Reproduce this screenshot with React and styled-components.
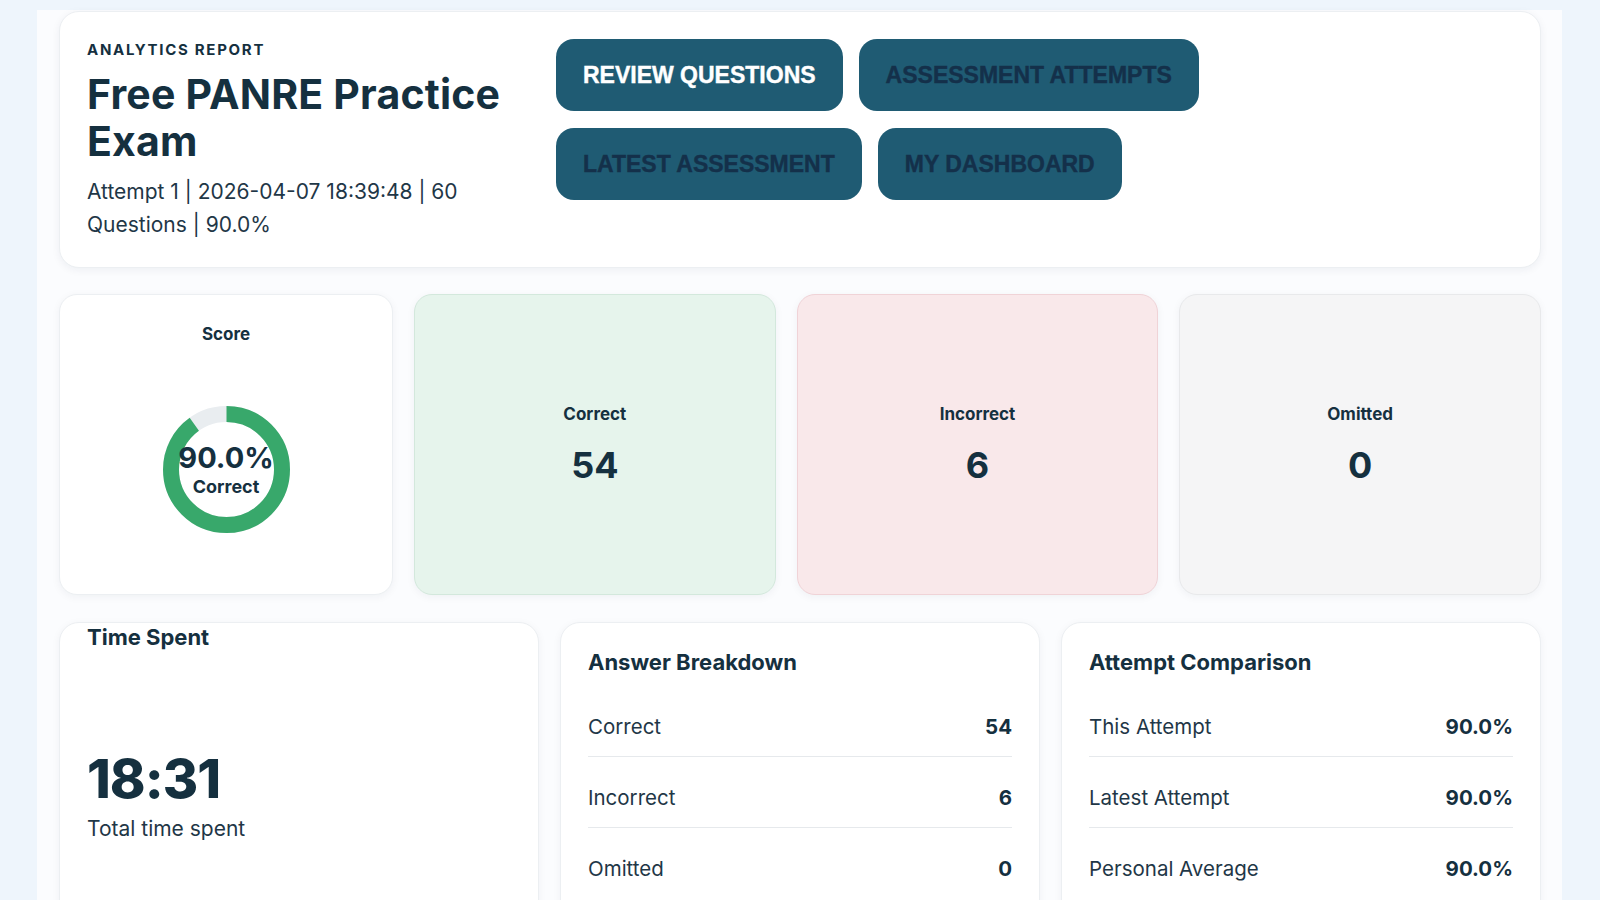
import React from 'react';
import styled, { createGlobalStyle } from 'styled-components';

const GlobalStyle = createGlobalStyle`
	* {
		box-sizing: border-box;
	}
	html,
	body {
		margin: 0;
		padding: 0;
		background: #eef5fc;
		font-family: Inter, 'Noto Sans', sans-serif;
		color: #15303f;
	}
`;

const Page = styled.div`
	padding-top: 10px;
	height: 900px;
	overflow: hidden;
`;

const Wrapper = styled.div`
	margin: 0 38px 0 37px;
	padding: 1px 21px 0 22px;
	background: #fbfcfe;
	min-height: 890px;
`;

const HeaderCard = styled.section`
	display: flex;
	gap: 29px;
	padding: 27px 27px 26px;
	background: #ffffff;
	border: 1px solid #eceff2;
	border-radius: 20px;
	box-shadow: 0 2px 8px rgba(20, 40, 60, 0.06);
`;

const TitleBlock = styled.div`
	width: 440px;
	flex-shrink: 0;
`;

const Eyebrow = styled.div`
	font-size: 15px;
	line-height: 22px;
	font-weight: 700;
	letter-spacing: 1.7px;
	text-transform: uppercase;
`;

const Title = styled.h1`
	margin: 10px 0 0;
	font-size: 41px;
	line-height: 47px;
	font-weight: 700;
	letter-spacing: 0.2px;
`;

const Meta = styled.p`
	margin: 10px 0 0;
	font-size: 21px;
	line-height: 33px;
	color: #1f3747;
`;

const Actions = styled.div`
	display: flex;
	flex-wrap: wrap;
	align-content: flex-start;
	gap: 17px 16px;
	width: 680px;
`;

const ActionButton = styled.button`
	height: 72px;
	padding: 0 27px;
	border: none;
	border-radius: 18px;
	background: #1f5b73;
	color: ${props => (props.primary ? '#ffffff' : '#14304a')};
	font-family: 'Liberation Sans', Arial, sans-serif;
	font-size: 23px;
	font-weight: 700;
	text-transform: uppercase;
	-webkit-text-stroke: 0.4px currentColor;
	cursor: pointer;
`;

const StatsRow = styled.div`
	display: grid;
	grid-template-columns: 334px repeat(3, 1fr);
	gap: 21px;
	margin-top: 26px;
`;

const tones = {
	white: { bg: '#ffffff', border: '#eceff2' },
	green: { bg: '#e6f4ec', border: '#d3e8dc' },
	red: { bg: '#f9e8ea', border: '#f0d3d7' },
	gray: { bg: '#f5f5f6', border: '#e8e9eb' },
};

const StatCard = styled.div`
	height: 301px;
	display: flex;
	flex-direction: column;
	align-items: center;
	justify-content: center;
	background: ${props => tones[props.tone].bg};
	border: 1px solid ${props => tones[props.tone].border};
	border-radius: 18px;
	box-shadow: 0 2px 8px rgba(20, 40, 60, 0.05);
`;

const ScoreCard = styled(StatCard)`
	justify-content: flex-start;
	padding-top: 28px;
`;

const StatLabel = styled.div`
	font-size: 17px;
	line-height: 22px;
	font-weight: 700;
`;

const StatValue = styled.div`
	margin-top: 18px;
	font-size: 36px;
	line-height: 44px;
	font-weight: 700;
`;

const DonutArea = styled.div`
	flex: 1;
	display: flex;
	align-items: center;
	justify-content: center;
`;

const Donut = styled.div`
	position: relative;
	width: 127px;
	height: 127px;
	& > svg {
		display: block;
		transform: rotate(-90deg);
	}
`;

const DonutText = styled.div`
	position: absolute;
	inset: 0;
	display: flex;
	flex-direction: column;
	align-items: center;
	justify-content: center;
	padding-top: 3px;
	white-space: nowrap;
	& > strong {
		font-size: 29px;
		line-height: 32px;
		font-weight: 700;
	}
	& > span {
		font-size: 18px;
		line-height: 26px;
		font-weight: 700;
	}
`;

const BottomRow = styled.div`
	display: grid;
	grid-template-columns: repeat(3, 1fr);
	gap: 21px;
	margin-top: 27px;
`;

const Panel = styled.div`
	height: 320px;
	padding: ${props => (props.flush ? '0 27px' : '25px 27px')};
	background: #ffffff;
	border: 1px solid #eceff2;
	border-radius: 20px;
	box-shadow: 0 2px 8px rgba(20, 40, 60, 0.05);
`;

const PanelTitle = styled.h3`
	margin: 0;
	font-size: 22px;
	line-height: 28px;
	font-weight: 700;
`;

const BigTime = styled.div`
	margin-top: 98px;
	font-size: 54px;
	line-height: 60px;
	font-weight: 800;
	letter-spacing: -1px;
`;

const TimeCaption = styled.div`
	margin-top: 5px;
	font-size: 21px;
	line-height: 30px;
	color: #1f3747;
`;

const Rows = styled.div`
	display: flex;
	flex-direction: column;
	gap: 12px;
	margin-top: 22px;
`;

const Row = styled.div`
	display: flex;
	justify-content: space-between;
	align-items: center;
	padding: 14px 0;
	border-bottom: ${props => (props.last ? 'none' : '1px solid #e6e9ec')};
	font-size: 20.5px;
	line-height: 30px;
	& > span {
		color: #1f3747;
	}
	& > strong {
		font-weight: 700;
	}
`;

const breakdown = [
	['Correct', '54'],
	['Incorrect', '6'],
	['Omitted', '0'],
];

const comparison = [
	['This Attempt', '90.0%'],
	['Latest Attempt', '90.0%'],
	['Personal Average', '90.0%'],
];

const ScoreDonut = ({ percent }) => {
	const r = 55.5;
	const c = 2 * Math.PI * r;
	return (
		<Donut>
			<svg width='127' height='127' viewBox='0 0 127 127'>
				<circle cx='63.5' cy='63.5' r={r} fill='none' stroke='#e9edf0' strokeWidth='16' />
				<circle
					cx='63.5'
					cy='63.5'
					r={r}
					fill='none'
					stroke='#38a86b'
					strokeWidth='16'
					strokeDasharray={`${(c * percent) / 100} ${c}`}
				/>
			</svg>
			<DonutText>
				<strong>{percent.toFixed(1)}%</strong>
				<span>Correct</span>
			</DonutText>
		</Donut>
	);
};

const App = () => {
	return (
		<Page>
			<GlobalStyle />
			<Wrapper>
				<HeaderCard>
					<TitleBlock>
						<Eyebrow>Analytics Report</Eyebrow>
						<Title>Free PANRE Practice Exam</Title>
						<Meta>Attempt 1 | 2026-04-07 18:39:48 | 60 Questions | 90.0%</Meta>
					</TitleBlock>
					<Actions>
						<ActionButton primary>Review Questions</ActionButton>
						<ActionButton>Assessment Attempts</ActionButton>
						<ActionButton>Latest Assessment</ActionButton>
						<ActionButton>My Dashboard</ActionButton>
					</Actions>
				</HeaderCard>

				<StatsRow>
					<ScoreCard tone='white'>
						<StatLabel>Score</StatLabel>
						<DonutArea>
							<ScoreDonut percent={90} />
						</DonutArea>
					</ScoreCard>
					<StatCard tone='green'>
						<StatLabel>Correct</StatLabel>
						<StatValue>54</StatValue>
					</StatCard>
					<StatCard tone='red'>
						<StatLabel>Incorrect</StatLabel>
						<StatValue>6</StatValue>
					</StatCard>
					<StatCard tone='gray'>
						<StatLabel>Omitted</StatLabel>
						<StatValue>0</StatValue>
					</StatCard>
				</StatsRow>

				<BottomRow>
					<Panel flush>
						<PanelTitle>Time Spent</PanelTitle>
						<BigTime>18:31</BigTime>
						<TimeCaption>Total time spent</TimeCaption>
					</Panel>
					<Panel>
						<PanelTitle>Answer Breakdown</PanelTitle>
						<Rows>
							{breakdown.map(([label, value], i) => (
								<Row key={label} last={i === breakdown.length - 1}>
									<span>{label}</span>
									<strong>{value}</strong>
								</Row>
							))}
						</Rows>
					</Panel>
					<Panel>
						<PanelTitle>Attempt Comparison</PanelTitle>
						<Rows>
							{comparison.map(([label, value], i) => (
								<Row key={label} last={i === comparison.length - 1}>
									<span>{label}</span>
									<strong>{value}</strong>
								</Row>
							))}
						</Rows>
					</Panel>
				</BottomRow>
			</Wrapper>
		</Page>
	);
};

export default App;
